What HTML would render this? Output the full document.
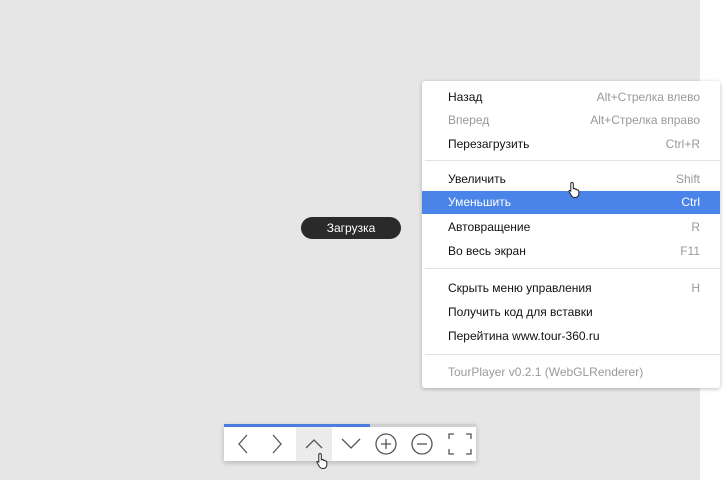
<!DOCTYPE html><html><head><meta charset="utf-8"><style>
body{margin:0;width:728px;height:480px;overflow:hidden;background:#fff;font-family:"Liberation Sans",sans-serif;position:relative}
.bg{position:absolute;left:0;top:0;width:700px;height:480px;background:#e6e6e6}
.pill{position:absolute;left:301px;top:217px;width:100px;height:22px;border-radius:11px;background:#2a2a2a;color:#fff;font-size:12px;line-height:22px;text-align:center}
.menu{position:absolute;left:422px;top:81px;width:298px;height:307px;background:#fff;border-radius:3px;box-shadow:0 1px 4px rgba(0,0,0,.25);font-size:12px}
.r{position:absolute;left:0;width:298px;height:24px;line-height:24px}
.r span{position:absolute;left:26px;color:#111}
.r b{position:absolute;right:20px;font-weight:normal;color:#999}
.r.d span{color:#999}
.r.h{background:#4a84e8}.r.h span,.r.h b{color:#fff}
.sep{position:absolute;left:3px;right:0;height:1px;background:#e2e2e2}
.tb{position:absolute;left:224px;top:424px;width:252px;height:37px;background:#fff;box-shadow:0 2px 5px rgba(0,0,0,.2)}
.tb .p{position:absolute;left:0;top:0;width:252px;height:3px;background:#d0d0d0}
.tb .p i{position:absolute;left:0;top:0;width:146px;height:3px;background:#4a7fe0}
.tb svg{position:absolute;top:3px;left:0}
</style></head><body>
<div class="bg"></div>
<div class="pill">Загрузка</div>
<div class="menu">
<div class="r" style="top:4px"><span>Назад</span><b>Alt+Стрелка влево</b></div>
<div class="r d" style="top:27px"><span>Вперед</span><b>Alt+Стрелка вправо</b></div>
<div class="r" style="top:51px"><span>Перезагрузить</span><b>Ctrl+R</b></div>
<div class="sep" style="top:79px"></div>
<div class="r" style="top:86px"><span>Увеличить</span><b>Shift</b></div>
<div class="r h" style="top:110px;height:23px;line-height:23px"><span>Уменьшить</span><b>Ctrl</b></div>
<div class="r" style="top:134px"><span>Автовращение</span><b>R</b></div>
<div class="r" style="top:158px"><span>Во весь экран</span><b>F11</b></div>
<div class="sep" style="top:187px"></div>
<div class="r" style="top:195px"><span>Скрыть меню управления</span><b>H</b></div>
<div class="r" style="top:219px"><span>Получить код для вставки</span></div>
<div class="r" style="top:243px"><span>Перейтина www.tour-360.ru</span></div>
<div class="sep" style="top:273px"></div>
<div class="r d" style="top:279px"><span>TourPlayer v0.2.1 (WebGLRenderer)</span></div>
</div>
<div class="tb"><div class="p"><i></i></div>
<svg width="252" height="34" viewBox="0 0 252 34" fill="none" stroke="#555" stroke-width="1.3">
<rect x="72" y="0" width="36" height="34" fill="#ececec" stroke="none"/>
<path d="M23 8l-8 9 8 9"/>
<path d="M49 8l8 9-8 9"/>
<path d="M82 21l8-8 8 8"/>
<path d="M118 12l9 9 9-9"/>
<circle cx="162" cy="17" r="10"/><path d="M157 17h10M162 12v10"/>
<circle cx="198" cy="17" r="10"/><path d="M193 17h10"/>
<path d="M225 12V7h5M242 7h5v5M247 22v5h-5M230 27h-5v-5"/>
</svg></div>
<svg style="position:absolute;left:316px;top:452px" width="14" height="18" viewBox="0 0 14 18"><path d="M4 1.5c.8 0 1.3.5 1.3 1.3v5l.5-.3c.8-.3 1.5.2 1.6.8.7-.4 1.6 0 1.7.7.8-.3 1.7.2 1.7 1V13c0 2-1.5 3.5-3.5 3.5H6.5C5 16.5 4 15.5 3 14L1 10.5c-.4-.7.4-1.5 1.2-1l.6.6V2.8c0-.8.4-1.3 1.2-1.3z" fill="#fff" stroke="#222" stroke-width="1"/></svg>
<svg style="position:absolute;left:568px;top:181px" width="14" height="18" viewBox="0 0 14 18"><path d="M4 1.5c.8 0 1.3.5 1.3 1.3v5l.5-.3c.8-.3 1.5.2 1.6.8.7-.4 1.6 0 1.7.7.8-.3 1.7.2 1.7 1V13c0 2-1.5 3.5-3.5 3.5H6.5C5 16.5 4 15.5 3 14L1 10.5c-.4-.7.4-1.5 1.2-1l.6.6V2.8c0-.8.4-1.3 1.2-1.3z" fill="#fff" stroke="#222" stroke-width="1"/></svg>
</body></html>
